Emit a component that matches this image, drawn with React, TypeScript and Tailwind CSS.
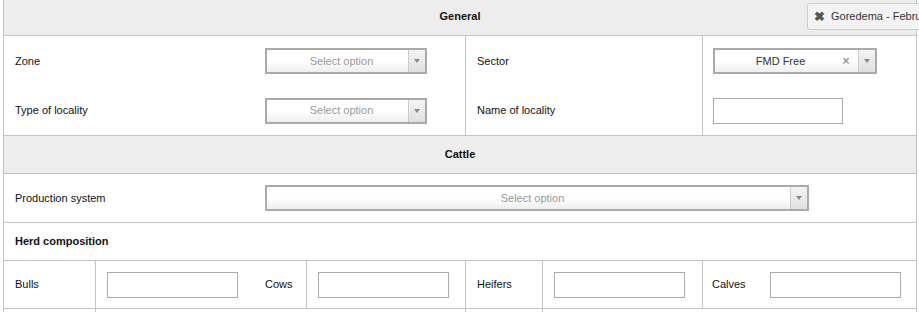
import React from 'react';

const font = { fontFamily: '"Liberation Sans", Arial, sans-serif' };

function Select({ value, placeholder, clearable, width }: { value?: string; placeholder?: string; clearable?: boolean; width: string }) {
  return (
    <div className={`flex h-[26px] ${width} border-2 border-[#aaaaaa] bg-gradient-to-b from-white from-50% to-[#eeeeee]`}>
      <div className={`flex-1 flex items-center justify-center pl-[8px] ${value ? 'text-[#333]' : 'text-[#999]'}`}>
        {value ?? placeholder}
      </div>
      {clearable && (
        <div className="w-[20px] flex items-center justify-center text-[#999] text-[12px] font-bold pr-[4px]">×</div>
      )}
      <div className="w-[17px] border-l border-[#cccccc] bg-gradient-to-b from-[#f4f4f4] to-[#e0e0e0] flex items-center justify-center">
        <svg width="6" height="4" viewBox="0 0 6 4"><path d="M0 0h6L3 4z" fill="#888" /></svg>
      </div>
    </div>
  );
}

function TextInput({ width = 'w-[131px]' }: { width?: string }) {
  return <div className={`h-[26px] ${width} border border-[#aaaaaa] bg-white`} />;
}

export default function App() {
  return (
    <div className="relative w-[919px] h-[312px] overflow-hidden bg-white text-[11px] text-[#111]" style={font}>
      <div className="ml-[3px] w-[914px] border-l border-r border-[#c4c4c4]">
        {/* General */}
        <div className="h-[36px] bg-[#ededed] border-b border-[#c4c4c4] flex items-center justify-center font-bold pb-[2px]">
          General
        </div>
        <div className="flex border-b border-[#c4c4c4]">
          <div className="w-[462px] border-r border-[#c4c4c4]">
            <div className="h-[50px] flex items-center">
              <div className="w-[261px] pl-[11px]">Zone</div>
              <Select placeholder="Select option" width="w-[162px]" />
            </div>
            <div className="h-[49px] flex items-center">
              <div className="w-[261px] pl-[11px]">Type of locality</div>
              <Select placeholder="Select option" width="w-[162px]" />
            </div>
          </div>
          <div className="w-[237px] border-r border-[#c4c4c4]">
            <div className="h-[50px] flex items-center pl-[11px]">Sector</div>
            <div className="h-[49px] flex items-center pl-[11px]">Name of locality</div>
          </div>
          <div className="flex-1 pl-[10px]">
            <div className="h-[50px] flex items-center">
              <Select value="FMD Free" clearable width="w-[164px]" />
            </div>
            <div className="h-[49px] flex items-center">
              <TextInput width="w-[130px]" />
            </div>
          </div>
        </div>

        {/* Cattle */}
        <div className="h-[38px] bg-[#ededed] border-b border-[#c4c4c4] flex items-center justify-center font-bold">
          Cattle
        </div>
        <div className="h-[49px] flex items-center border-b border-[#c4c4c4]">
          <div className="w-[261px] pl-[11px]">Production system</div>
          <Select placeholder="Select option" width="w-[544px]" />
        </div>
        <div className="h-[38px] flex items-center border-b border-[#c4c4c4] pl-[11px] font-bold">
          Herd composition
        </div>
        <div className="h-[48px] flex items-center border-b border-[#c4c4c4]">
          <div className="w-[92px] h-full flex items-center pl-[11px] border-r border-[#c4c4c4]">Bulls</div>
          <div className="w-[211px] h-full flex items-center pl-[11px] border-r border-[#c4c4c4]">
            <TextInput />
            <div className="pl-[27px]">Cows</div>
          </div>
          <div className="w-[159px] h-full flex items-center pl-[11px] border-r border-[#c4c4c4]">
            <TextInput />
          </div>
          <div className="w-[77px] h-full flex items-center pl-[11px] border-r border-[#c4c4c4]">Heifers</div>
          <div className="w-[160px] h-full flex items-center pl-[11px] border-r border-[#c4c4c4]">
            <TextInput />
          </div>
          <div className="flex-1 h-full flex items-center pl-[9px]">
            <div className="w-[58px]">Calves</div>
            <TextInput />
          </div>
        </div>
        <div className="h-[10px] flex">
          <div className="w-[92px] border-r border-[#c4c4c4]" />
          <div className="w-[370px] border-r border-[#c4c4c4]" />
          <div className="w-[77px] border-r border-[#c4c4c4]" />
        </div>
      </div>

      {/* Open record tab */}
      <div className="absolute left-[807px] top-[3px] h-[27px] pl-[6px] pr-[10px] flex items-center gap-[6px] whitespace-nowrap bg-[#f3f3f3] border border-[#cccccc] rounded-[3px] text-[11px] text-[#333]">
        <span className="text-[#555] text-[13px] font-bold">✖</span>
        <span>Goredema - February 2016</span>
      </div>
    </div>
  );
}
